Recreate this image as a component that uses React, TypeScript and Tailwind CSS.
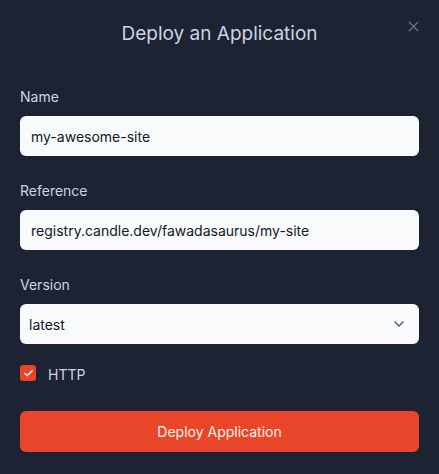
import { ChevronDown, X, Check } from 'lucide-react';

const FIELDS = [
  { label: 'Name', value: 'my-awesome-site' },
  { label: 'Reference', value: 'registry.candle.dev/fawadasaurus/my-site' },
];

function Label({ children }: { children: React.ReactNode }) {
  return (
    <div className="mb-[9px] h-5 text-[14px] leading-5 text-slate-300">
      {children}
    </div>
  );
}

export default function App() {
  return (
    <div
      className="relative min-h-[474px] w-[439px] bg-[#1d2332] px-5 pt-[22px]"
      style={{ fontFamily: 'Inter, "Noto Sans", sans-serif' }}
    >
      <button className="absolute right-[17px] top-[18px] text-gray-500">
        <X size={17} strokeWidth={1.75} />
      </button>
      <h1 className="text-center text-[19px] leading-6 text-slate-300">
        Deploy an Application
      </h1>

      <div className="mt-[41px] flex flex-col gap-[25px]">
        {FIELDS.map((f) => (
          <div key={f.label}>
            <Label>{f.label}</Label>
            <div className="flex h-10 items-center rounded-md bg-slate-50 px-[11px] text-[14px] text-gray-900">
              {f.value}
            </div>
          </div>
        ))}
        <div>
          <Label>Version</Label>
          <div className="flex h-10 items-center justify-between rounded-md bg-slate-50 pl-[9px] pr-[12px] text-[14px] text-gray-900">
            <span>latest</span>
            <ChevronDown size={16} strokeWidth={2} className="text-gray-600" />
          </div>
        </div>
      </div>

      <label className="mt-[19px] flex h-5 items-center gap-3">
        <span className="flex h-4 w-4 items-center justify-center rounded-[3px] bg-[#e8452b] text-white">
          <Check size={11} strokeWidth={3} />
        </span>
        <span className="mt-[3px] text-[14px] leading-5 text-slate-300">HTTP</span>
      </label>

      <button className="mt-[28px] flex h-[41px] w-full items-center justify-center rounded-md bg-[#e8452b] text-[14px] text-orange-50">
        Deploy Application
      </button>
    </div>
  );
}
